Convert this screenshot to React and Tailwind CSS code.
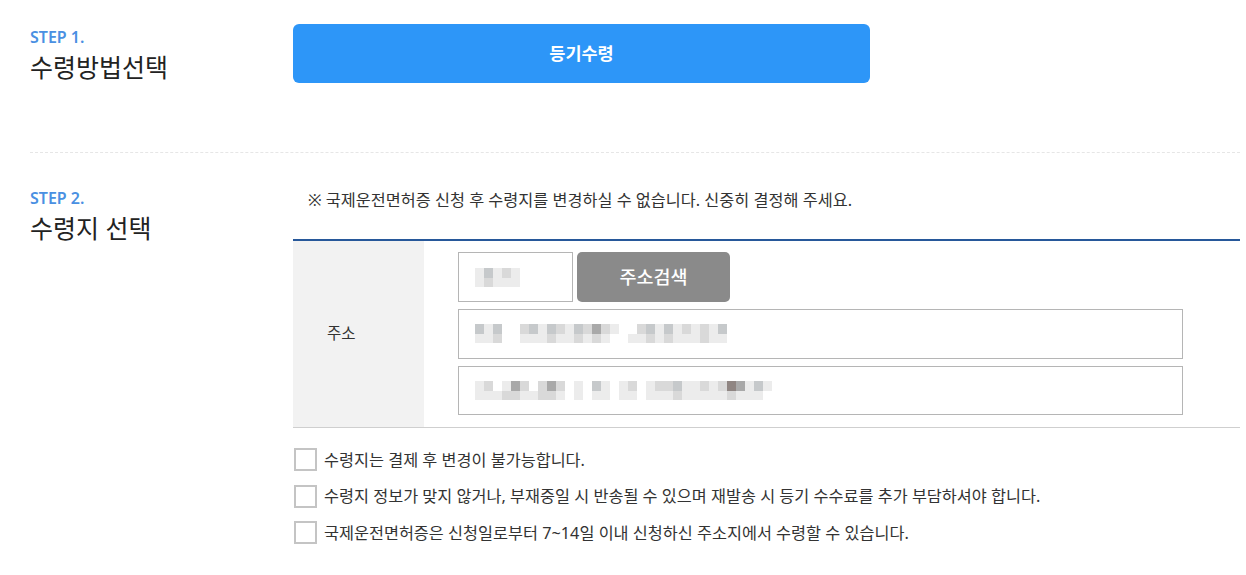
import { useState } from 'react';

const FONT = "font-['Noto_Sans','Noto_Sans_CJK_KR',sans-serif]";

// blurred (mosaic) value inside the inputs
const Mosaic = ({ cells }) => {
  return (
    <div className="flex flex-col">
      <div className="flex h-[10px]">
        {cells.map((c, i) => (
          <div key={'t' + i} className={`w-[9px] h-[10px] ${c[0]}`} />
        ))}
      </div>
      <div className="flex h-[9px]">
        {cells.map((c, i) => (
          <div key={'b' + i} className={`w-[9px] h-[9px] ${c[1]}`} />
        ))}
      </div>
    </div>
  );
};

const L = 'bg-[#ececec]';
const M = 'bg-[#d9d9d9]';
const D = 'bg-[#c6c9cb]';
const K = 'bg-[#a9a9a9]';
const W = 'bg-transparent';
const R = 'bg-[#8f8582]';

const zipCells = [[L, L], [D, M], [L, L], [M, L], [L, L]];
const addr1Cells = [
  [D, L], [L, L], [D, M], [W, W], [W, W], [M, L], [D, L], [L, L], [D, M], [M, L], [L, L],
  [D, M], [M, L], [K, M], [M, L], [L, W], [W, W], [W, L], [M, L], [D, M], [L, L], [D, M], [L, L],
  [M, L], [L, L], [M, M], [L, L], [D, L],
];
const addr2Cells = [
  [L, L], [M, L], [W, L], [L, M], [K, M], [M, L], [W, L], [M, M], [K, M], [M, L], [W, W],
  [L, L], [W, W], [D, L], [L, L], [W, W], [L, L], [M, L], [W, W], [L, L], [M, L], [M, L],
  [D, M], [L, L], [L, L], [M, L], [L, L], [M, L], [R, M], [K, L], [L, L], [D, L], [L, W],
];

const Check = ({ label }) => {
  const [on, setOn] = useState(false);
  return (
    <label className="flex items-center gap-[7px] h-[23px] cursor-pointer">
      <span
        className="w-[23px] h-[23px] border-2 border-[#c4c4c4] bg-white flex items-center justify-center"
        onClick={() => setOn(!on)}
      >
        {on && <span className="w-[11px] h-[11px] bg-[#2d96f8]" />}
      </span>
      <span className="text-[16.3px] leading-[20px] text-[#333333]">{label}</span>
    </label>
  );
};

export default function App() {
  return (
    <div className={`w-[1246px] h-[575px] bg-white pl-[30px] pr-[6px] ${FONT}`}>
      {/* STEP 1 */}
      <section className="flex pt-[24px] pb-[69px] border-b border-dashed border-[#e6e6e6]">
        <div className="w-[263px] pt-[3px]">
          <p className="text-[16px] leading-[20px] font-semibold text-[#4a90e2]">STEP 1.</p>
          <h2 className="mt-[4px] text-[25px] leading-[32px] text-[#222222]">수령방법선택</h2>
        </div>
        <button className="w-[577px] h-[59px] rounded-[6px] bg-[#2d96f8] text-white text-[17.5px] font-bold">
          등기수령
        </button>
      </section>

      {/* STEP 2 */}
      <section className="flex pt-[35px]">
        <div className="w-[263px]">
          <p className="text-[16px] leading-[20px] font-semibold text-[#4a90e2]">STEP 2.</p>
          <h2 className="mt-[4px] text-[25px] leading-[32px] text-[#222222]">수령지 선택</h2>
        </div>
        <div className="flex-1">
          <p className="pl-[15px] pt-[2px] text-[16.3px] leading-[20px] text-[#333333]">
            ※ 국제운전면허증 신청 후 수령지를 변경하실 수 없습니다. 신중히 결정해 주세요.
          </p>
          <div className="mt-[29px] flex border-t-2 border-[#27589a] border-b border-b-[#cfcfcf]">
            <div className="w-[131px] bg-[#f2f2f2] flex items-center pl-[34px] text-[15.5px] text-[#333333]">
              주소
            </div>
            <div className="pl-[34px] pt-[11px] pb-[12px] flex flex-col gap-[7px]">
              <div className="flex gap-[4px]">
                <div className="w-[115px] h-[50px] border border-[#b5b5b5] flex items-center pl-[16px]">
                  <Mosaic cells={zipCells} />
                </div>
                <button className="w-[153px] h-[50px] rounded-[5px] bg-[#8a8a8a] text-white text-[18.5px] font-medium">
                  주소검색
                </button>
              </div>
              <div className="w-[725px] h-[49.5px] border border-[#b5b5b5] flex items-center pl-[16px]">
                <Mosaic cells={addr1Cells} />
              </div>
              <div className="w-[725px] h-[49.5px] border border-[#b5b5b5] flex items-center pl-[16px]">
                <Mosaic cells={addr2Cells} />
              </div>
            </div>
          </div>
          <div className="mt-[20px] flex flex-col gap-[13.5px] pl-[1px]">
            <Check label="수령지는 결제 후 변경이 불가능합니다." />
            <Check label="수령지 정보가 맞지 않거나, 부재중일 시 반송될 수 있으며 재발송 시 등기 수수료를 추가 부담하셔야 합니다." />
            <Check label="국제운전면허증은 신청일로부터 7~14일 이내 신청하신 주소지에서 수령할 수 있습니다." />
          </div>
        </div>
      </section>
    </div>
  );
}
